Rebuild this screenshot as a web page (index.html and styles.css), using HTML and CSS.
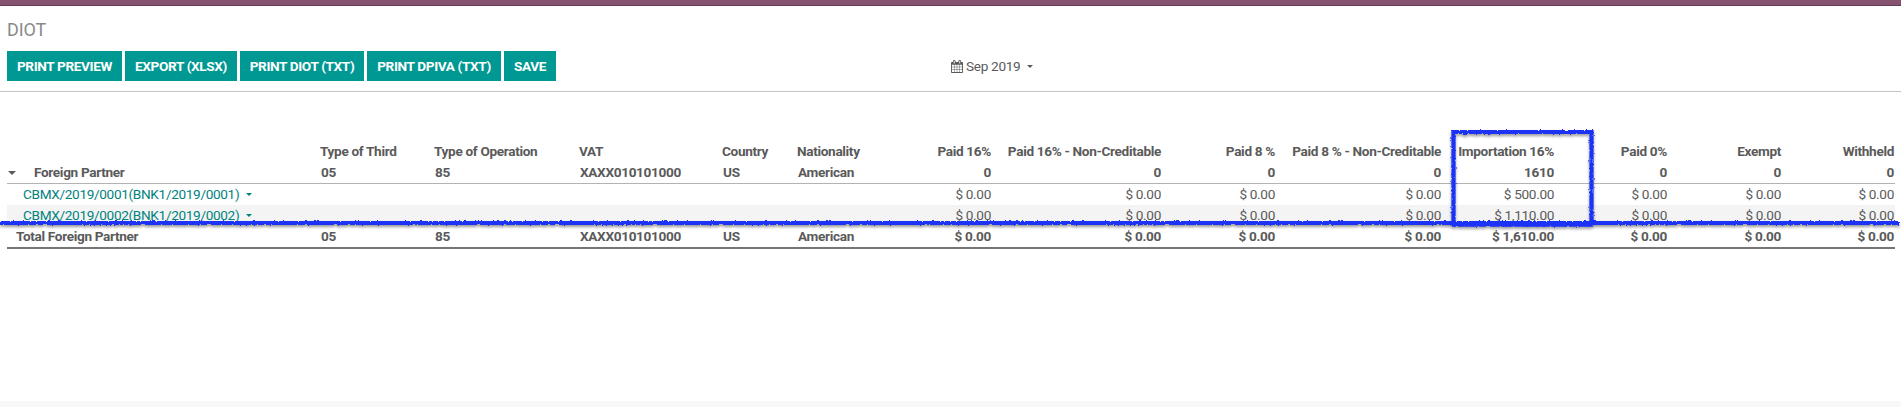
FILE: index.html
```html
<!DOCTYPE html>
<html lang="en">
<head>
<meta charset="utf-8">
<title>DIOT</title>
<link rel="stylesheet" href="styles.css">
</head>
<body>
<div class="navbar"></div>
<header class="control-panel">
  <h1 class="title">DIOT</h1>
  <div class="toolbar">
    <div class="buttons">
      <button class="btn b1">PRINT PREVIEW</button>
      <button class="btn b2">EXPORT (XLSX)</button>
      <button class="btn b3">PRINT DIOT (TXT)</button>
      <button class="btn b4">PRINT DPIVA (TXT)</button>
      <button class="btn b5">SAVE</button>
    </div>
    <div class="date">
      <svg class="calendar" viewBox="0 0 1664 1792"><path fill="currentColor" d="M128 1664h288v-288h-288v288zM480 1664h320v-288h-320v288zM128 1312h288v-320h-288v320zM480 1312h320v-320h-320v320zM128 928h288v-288h-288v288zM864 1664h320v-288h-320v288zM480 928h320v-288h-320v288zM1248 1664h288v-288h-288v288zM864 1312h320v-320h-320v320zM512 448v-288q0-13-9.500-22.500t-22.500-9.500h-64q-13 0-22.500 9.500t-9.500 22.500v288q0 13 9.500 22.500t22.500 9.500h64q13 0 22.500-9.500t9.500-22.500zM1248 1312h288v-320h-288v320zM864 928h320v-288h-320v288zM1248 928h288v-288h-288v288zM1280 448v-288q0-13-9.500-22.500t-22.500-9.500h-64q-13 0-22.500 9.500t-9.500 22.500v288q0 13 9.500 22.500t22.500 9.500h64q13 0 22.500-9.500t9.500-22.500zM1664 384v1280q0 52-38 90t-90 38h-1408q-52 0-90-38t-38-90v-1280q0-52 38-90t90-38h128v-96q0-66 47-113t113-47h64q66 0 113 47t47 113v96h384v-96q0-66 47-113t113-47h64q66 0 113 47t47 113v96h128q52 0 90 38t38 90z"/></svg>
      <span>Sep 2019</span><i class="caret"></i>
    </div>
  </div>
</header>
<main class="report">
  <table class="grid">
    <colgroup>
      <col class="c-name"><col class="c-third"><col class="c-op"><col class="c-vat"><col class="c-country"><col class="c-nat"><col class="c-p16"><col class="c-p16n"><col class="c-p8"><col class="c-p8n"><col class="c-imp"><col class="c-p0"><col class="c-ex"><col class="c-wh">
    </colgroup>
    <thead>
      <tr><th></th><th>Type of Third</th><th>Type of Operation</th><th>VAT</th><th>Country</th><th>Nationality</th><th class="num">Paid 16%</th><th class="num">Paid 16% - Non-Creditable</th><th class="num">Paid 8 %</th><th class="num">Paid 8 % - Non-Creditable</th><th class="num">Importation 16%</th><th class="num">Paid 0%</th><th class="num">Exempt</th><th class="num">Withheld</th></tr>
    </thead>
    <tbody>
      <tr class="partner"><td><i class="caret fold"></i>Foreign Partner</td><td>05</td><td>85</td><td>XAXX010101000</td><td>US</td><td>American</td><td class="num">0</td><td class="num">0</td><td class="num">0</td><td class="num">0</td><td class="num">1610</td><td class="num">0</td><td class="num">0</td><td class="num">0</td></tr>
      <tr class="line"><td><a class="move">CBMX/2019/0001(BNK1/2019/0001)<i class="caret"></i></a></td><td></td><td></td><td></td><td></td><td></td><td class="num">$ 0.00</td><td class="num">$ 0.00</td><td class="num">$ 0.00</td><td class="num">$ 0.00</td><td class="num">$ 500.00</td><td class="num">$ 0.00</td><td class="num">$ 0.00</td><td class="num">$ 0.00</td></tr>
      <tr class="line striped"><td><a class="move">CBMX/2019/0002(BNK1/2019/0002)<i class="caret"></i></a></td><td></td><td></td><td></td><td></td><td></td><td class="num">$ 0.00</td><td class="num">$ 0.00</td><td class="num">$ 0.00</td><td class="num">$ 0.00</td><td class="num">$ 1,110.00</td><td class="num">$ 0.00</td><td class="num">$ 0.00</td><td class="num">$ 0.00</td></tr>
      <tr class="total"><td>Total Foreign Partner</td><td>05</td><td>85</td><td>XAXX010101000</td><td>US</td><td>American</td><td class="num">$ 0.00</td><td class="num">$ 0.00</td><td class="num">$ 0.00</td><td class="num">$ 0.00</td><td class="num">$ 1,610.00</td><td class="num">$ 0.00</td><td class="num">$ 0.00</td><td class="num">$ 0.00</td></tr>
    </tbody>
  </table>
</main>
<div class="bottom"></div>
<svg class="marks" width="1901" height="407" viewBox="0 0 1901 407">
  <defs>
    <filter id="crayon" filterUnits="userSpaceOnUse" x="0" y="0" width="1901" height="407">
      <feTurbulence type="fractalNoise" baseFrequency="0.5" numOctaves="2" seed="4" result="n"/>
      <feDisplacementMap in="SourceGraphic" in2="n" scale="2.800" xChannelSelector="R" yChannelSelector="G" result="rough"/>
      <feDropShadow in="rough" dx="0" dy="2" stdDeviation="1.500" flood-color="#000" flood-opacity="0.4"/>
    </filter>
  </defs>
  <g filter="url(#crayon)" fill="none" stroke="#1a30f5">
    <path stroke-width="4.200" d="M0 223H1899"/>
    <path stroke-width="4.200" d="M1453.500 223.500V132H1591.500V223.500"/>
    <path stroke-width="5.500" d="M1451.500 224H1593.500"/>
  </g>
</svg>
</body>
</html>
```
FILE: styles.css
```css
* { box-sizing: border-box; }
body {
  margin: 0;
  height: 407px;
  overflow: hidden;
  display: flex;
  flex-direction: column;
  background: #fff;
  color: #5a5a5a;
  font: 13.6px/20px Roboto, sans-serif;
  letter-spacing: -0.33px;
}
.navbar { height: 6px; flex: none; background: #875170; border-bottom: 1px solid #623a52; }
.control-panel { height: 86px; flex: none; padding: 13px 7px 0; border-bottom: 1px solid #c5c5c5; }
.title { margin: 0 0 10px; font-size: 18px; line-height: 22px; font-weight: 400; color: #8a8a8a; letter-spacing: -0.1px; }
.toolbar { display: flex; align-items: center; }
.buttons { display: flex; gap: 3px; width: 944px; }
.btn { height: 30px; padding: 0; border: 0; background: #009892; color: #fff; font: 700 13.6px/30px Roboto, sans-serif; letter-spacing: -0.36px; white-space: nowrap; }
.b1 { width: 115px; }
.b2 { width: 112px; }
.b3 { width: 124px; }
.b4 { width: 134px; }
.b5 { width: 52px; }
.date { display: flex; align-items: center; gap: 3px; letter-spacing: -0.3px; }
.calendar { width: 12px; height: 13px; }
.caret { display: inline-block; border: 3px solid transparent; border-top-color: currentColor; border-bottom: 0; vertical-align: 3px; }
.date .caret { margin-left: 4px; }
.report { flex: 1; padding: 49px 6px 0 7px; }
.grid { width: 1888px; table-layout: fixed; border-collapse: separate; border-spacing: 0; }
.c-name { width: 312px; }
.c-third { width: 114px; }
.c-op { width: 145px; }
.c-vat { width: 143px; }
.c-country { width: 75px; }
.c-nat { width: 83px; }
.c-p16 { width: 113px; }
.c-p16n { width: 170px; }
.c-p8 { width: 114px; }
.c-p8n { width: 166px; }
.c-imp { width: 113px; }
.c-p0 { width: 113px; }
.c-ex { width: 114px; }
.c-wh { width: 113px; }
th, td { padding: 0 1px 0 2px; text-align: left; vertical-align: top; white-space: nowrap; height: 21px; line-height: 20px; }
th { padding-left: 1px; font-weight: 700; }
.num { text-align: right; }
.partner td { height: 22px; font-weight: 700; border-bottom: 1px solid #b3b3b3; }
.partner td:first-child { padding-left: 1px; }
.fold { border-width: 4px 4px 0; margin-right: 18px; vertical-align: 2px; }
.move { padding-left: 14px; color: #00837e; }
.move .caret { margin-left: 7px; }
.line td { line-height: 21px; }
.total td { height: 23px; font-weight: 700; border-bottom: 2px solid #757575; }
.total td:first-child { padding-left: 9px; }
.striped td { background: #f4f4f4; }
.bottom { height: 6px; flex: none; background: #f8f8f8; }
.marks { position: absolute; left: 0; top: 0; pointer-events: none; }
```
